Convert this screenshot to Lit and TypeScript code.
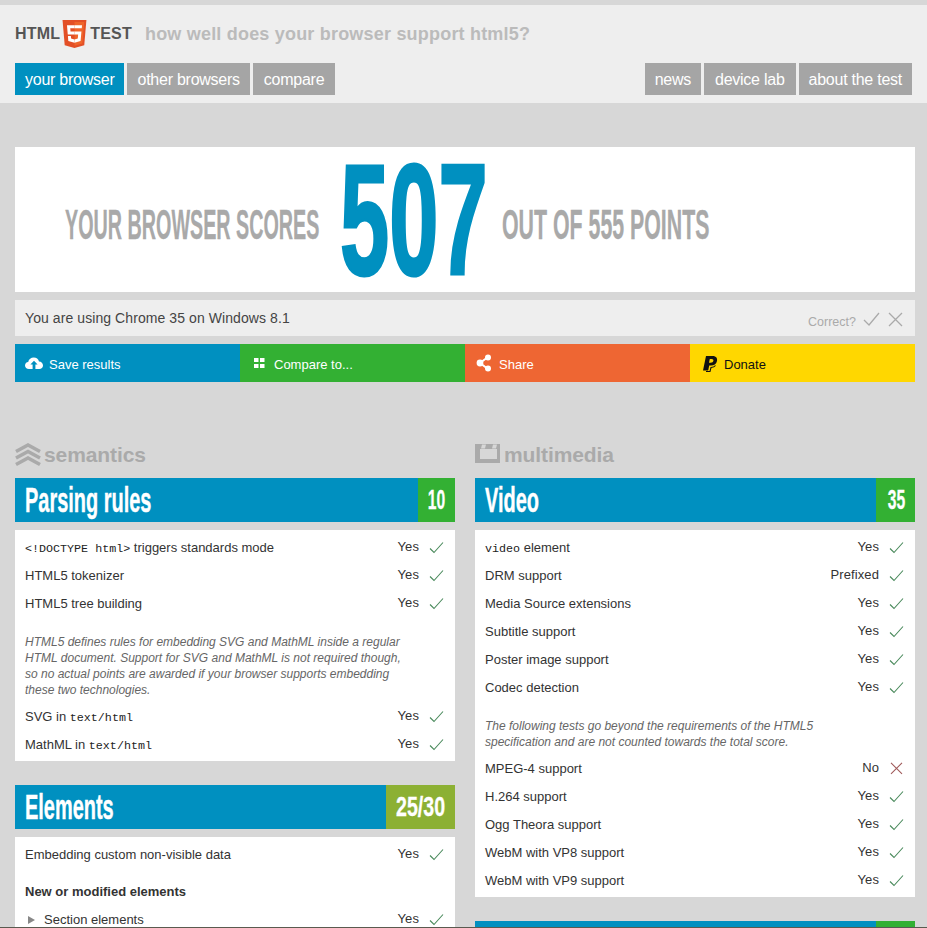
import { LitElement, html, css, svg } from "lit";
import { customElement } from "lit/decorators.js";

type Row = { label: unknown; status?: string; kind?: "yes" | "no" };
const check = svg`<svg class="mark" viewBox="0 0 15 13"><path d="M1 7.5 L5 11.5 L14 1.5" fill="none" stroke="#4a8a5c" stroke-width="1.1"/></svg>`;
const cross = svg`<svg class="mark" viewBox="0 0 15 13"><path d="M2 .8 L13 11.8 M13 .8 L2 11.8" fill="none" stroke="#a05a5a" stroke-width="1.1"/></svg>`;

const yes = (label: unknown): Row => ({ label, status: "Yes", kind: "yes" });

@customElement("app-root")
export class AppRoot extends LitElement {
  static styles = css`
    :host { display: block; position: relative; height: 928px; overflow: hidden; background: #d7d7d7; font-family: "Liberation Sans", Arial, sans-serif; color: #333; font-size: 13px; }
    * { box-sizing: border-box; }
    code { font-family: "Liberation Mono", monospace; font-size: 11.7px; color: #222; }
    .frame { position: absolute; left: 0; right: 0; bottom: 0; height: 1px; background: #5a5a50; }
    header { margin-top: 5px; height: 98px; background: #eee; padding: 15px 15px 0; }
    .brand { display: flex; align-items: center; height: 28px; font-weight: bold; font-size: 16px; color: #555; letter-spacing: .2px; }
    .brand svg { width: 25px; height: 28px; margin: 0 3px 0 2px; }
    .tagline { margin-left: 13px; font-size: 18px; color: #bbb; letter-spacing: .2px; }
    nav { display: flex; justify-content: space-between; margin-top: 15px; }
    .tabs { display: flex; gap: 3px; }
    .tab { height: 32px; line-height: 34px; padding: 0 10px; background: #a5a5a5; color: #fff; font-size: 16px; letter-spacing: -.25px; }
    .tab.on { background: #0090c0; }
    .tab.wide { padding: 0 11px; }
    main { padding: 44px 12px 0 15px; }
    .score { height: 145px; background: #fff; display: flex; align-items: center; padding-left: 50px; }
    .cond { display: block; white-space: nowrap; transform-origin: left center; font-weight: bold; }
    .sl { width: 275px; color: #a9a9a9; }
    .sl .cond { font-size: 42px; transform: scaleX(.47); margin-top: 10px; -webkit-text-stroke: .3px #a9a9a9; }
    .num { width: 162px; color: #0090c0; }
    .num .cond { font-size: 158px; line-height: 145px; transform: scaleX(.56); -webkit-text-stroke: 3px #0090c0; }
    .sl.sr .cond { transform: scaleX(.508); }
    .info { margin-top: 8px; height: 36px; background: #eee; display: flex; align-items: center; justify-content: space-between; padding: 0 11px 0 10px; font-size: 14px; color: #444; letter-spacing: .08px; }
    .correct { display: flex; align-items: center; gap: 7px; color: #aaa; font-size: 12.5px; padding-top: 2px; letter-spacing: 0; }
    .correct span { margin-top: 5px; }
    .correct svg { width: 17px; height: 16px; }
    .actions { margin-top: 8px; display: grid; grid-template-columns: repeat(4, 1fr); height: 38px; }
    .act { display: flex; align-items: center; padding-left: 10px; color: #fff; font-size: 13px; gap: 6px; padding-top: 2px; }
    .act svg { width: 18px; height: 18px; flex: none; margin-top: -3px; }
    .blue { background: #0090c0; } .green { background: #33b033; } .orange { background: #ee6633; } .gold { background: #ffd700; color: #111; }
    .cols { margin-top: 59px; display: grid; grid-template-columns: 440px 440px; gap: 20px; align-items: start; }
    .sect { display: flex; align-items: center; height: 26px; padding-top: 2px; margin-bottom: 11px; font-size: 21px; font-weight: bold; color: #aaa; letter-spacing: -.1px; gap: 3px; }
    .sect svg { width: 26px; height: 26px; flex: none; margin-top: -2px; }
    .hd { display: flex; height: 44px; background: #0090c0; color: #fff; }
    .hd .t { flex: 1; padding-left: 10px; }
    .hd .t .cond { font-size: 35px; line-height: 44px; transform: scaleX(.57); -webkit-text-stroke: .4px #fff; }
    .badge { width: var(--w); text-align: right; background: #33b033; padding-right: 10px; overflow: hidden; }
    .badge.mid { background: #8cb033; }
    .badge .cond { font-size: 28px; line-height: 44px; transform: scaleX(.56); transform-origin: right center; display: inline-block; margin-left: -60px; -webkit-text-stroke: .3px #fff; }
    .badge.mid .cond { transform: scaleX(.7); }
    .panel { margin: 8px 0 24px; background: #fff; padding: 3px 10px; }
    .row { height: 28px; display: flex; align-items: center; padding-top: 1px; }
    .row .l { flex: 1; }
    .row .s { margin-top: -3px; letter-spacing: .1px; }
    .mark { width: 15px; height: 13px; margin: -1px 1px 0 10px; flex: none; }
    .note { margin: 17px 0 4px; max-width: 390px; font-size: 12px; line-height: 16px; font-style: italic; color: #666; }
    .sub { font-weight: bold; margin-top: 10px; height: 27px; display: flex; align-items: center; }
    .arrow { display: inline-block; width: 0; height: 0; border-left: 7px solid #888; border-top: 4px solid transparent; border-bottom: 4px solid transparent; margin: 0 9px 0 3px; }
  `;

  private cond(text: string) {
    return html`<span class="cond">${text}</span>`;
  }

  private head(title: string, score: string, w: number, mid = false) {
    return html`<div class="hd">
      <div class="t">${title ? this.cond(title) : ""}</div>
      <div class="badge ${mid ? "mid" : ""}" style="--w:${w}px">${score ? this.cond(score) : ""}</div>
    </div>`;
  }

  private row(r: Row) {
    return html`<div class="row"><span class="l">${r.label}</span><span class="s">${r.status}</span>${r.kind === "no" ? cross : check}</div>`;
  }

  render() {
    return html`
      <header>
        <div class="brand">
          <span>HTML</span>
          <svg viewBox="20 0 472 512" preserveAspectRatio="none">
            <path d="M71 460L30 0h451l-41 460-185 52" fill="#e34f26"/>
            <path d="M256 472l149-41 35-394H256" fill="#ef652a"/>
            <path d="M256 208h-75l-5-58h80V94H114l15 171h127zm-1 147l-63-17-4-45h-56l7 89 116 32z" fill="#fff"/>
            <path d="M255 208v57h70l-7 74-63 17v59l116-32 16-175zm1-114v56h137l5-56z" fill="#fff"/>
          </svg>
          <span>TEST</span>
          <span class="tagline">how well does your browser support html5?</span>
        </div>
        <nav>
          <div class="tabs">
            <div class="tab on">your browser</div>
            <div class="tab">other browsers</div>
            <div class="tab wide">compare</div>
          </div>
          <div class="tabs">
            <div class="tab">news</div>
            <div class="tab wide">device lab</div>
            <div class="tab">about the test</div>
          </div>
        </nav>
      </header>
      <main>
        <section class="score">
          <div class="sl">${this.cond("YOUR BROWSER SCORES")}</div>
          <div class="num">${this.cond("507")}</div>
          <div class="sl sr">${this.cond("OUT OF 555 POINTS")}</div>
        </section>
        <div class="info">
          <span>You are using Chrome 35 on Windows 8.1</span>
          <div class="correct">
            <span>Correct?</span>
            <svg viewBox="0 0 17 16"><path d="M1 9 L6 14 L16 2" fill="none" stroke="#aaa" stroke-width="1.3"/></svg>
            <svg viewBox="0 0 17 16"><path d="M2 2 L15 15 M15 2 L2 15" fill="none" stroke="#aaa" stroke-width="1.3"/></svg>
          </div>
        </div>
        <div class="actions">
          <div class="act blue">
            <svg viewBox="0 0 18 18"><path d="M4 15 C1.5 15 0 13.4 0 11.5 C0 9.6 1.4 8.2 3.2 8 C3.8 5.4 6 3.6 8.8 3.6 C11.4 3.6 13.4 5.2 14 7.5 C16.3 7.6 18 9.3 18 11.4 C18 13.4 16.4 15 14.3 15 Z" fill="#fff"/><path d="M9 6.8 L12.6 10.6 L10.4 10.6 L10.4 15 L7.6 15 L7.6 10.6 L5.4 10.6 Z" fill="#0090c0"/></svg>
            Save results
          </div>
          <div class="act green">
            <svg viewBox="0 0 18 18"><g fill="#fff"><rect x="4" y="4" width="4.5" height="4"/><rect x="10" y="4" width="4.5" height="4"/><rect x="4" y="10" width="4.5" height="4"/><rect x="10" y="10" width="4.5" height="4"/></g></svg>
            Compare to...
          </div>
          <div class="act orange">
            <svg viewBox="0 0 18 18"><path d="M13 3 L5 9 L13 15" fill="none" stroke="#fff" stroke-width="2"/><circle cx="13" cy="3.4" r="3" fill="#fff"/><circle cx="5" cy="9" r="3.4" fill="#fff"/><circle cx="13" cy="14.6" r="3" fill="#fff"/></svg>
            Share
          </div>
          <div class="act gold">
            <svg viewBox="0 0 18 18"><path d="M3 16.5 L6 2 H12.5 C16.5 2 17.5 4.6 17 7 C16.4 10 14 11.5 11 11.5 H9.2 L8.2 16.5 Z M9.8 5 L9 8.8 H10.6 C12.2 8.8 13.2 8 13.4 6.8 C13.6 5.7 12.9 5 11.6 5 Z" fill="#111" fill-rule="evenodd"/><path d="M15.5 11.5 C14.5 13 13 13.4 11 13.5 L10 17.5 L6 17.5" fill="none" stroke="#111" stroke-width="1.1"/></svg>
            Donate
          </div>
        </div>
        <div class="cols">
          <div>
            <div class="sect">
              <svg viewBox="0 0 26 26"><g fill="none" stroke="#aaa" stroke-width="3.6"><path d="M1 10.5 L13 4 L25 10.5"/><path d="M1 17 L13 10.5 L25 17"/><path d="M1 23.5 L13 17 L25 23.5"/></g></svg>
              semantics
            </div>
            ${this.head("Parsing rules", "10", 37)}
            <div class="panel">
              ${[yes(html`<code>&lt;!DOCTYPE html&gt;</code> triggers standards mode`), yes("HTML5 tokenizer"), yes("HTML5 tree building")].map((r) => this.row(r))}
              <div class="note">HTML5 defines rules for embedding SVG and MathML inside a regular HTML document. Support for SVG and MathML is not required though, so no actual points are awarded if your browser supports embedding these two technologies.</div>
              ${[yes(html`SVG in <code>text/html</code>`), yes(html`MathML in <code>text/html</code>`)].map((r) => this.row(r))}
            </div>
            ${this.head("Elements", "25/30", 69, true)}
            <div class="panel">
              ${this.row(yes("Embedding custom non-visible data"))}
              <div class="sub">New or modified elements</div>
              ${this.row(yes(html`<i class="arrow"></i>Section elements`))}
            </div>
          </div>
          <div>
            <div class="sect">
              <svg viewBox="0 0 26 26"><path d="M0 3 H25 V22 H0 Z M5 8 V18 H22 V8 Z M7 3.5 L6 7.5 H10 L11 3.5 Z M18 3.5 L17 7.5 H21 L22 3.5 Z" fill="#aaa" fill-rule="evenodd"/></svg>
              multimedia
            </div>
            ${this.head("Video", "35", 39)}
            <div class="panel">
              ${[yes(html`<code>video</code> element`), { label: "DRM support", status: "Prefixed", kind: "yes" } as Row, yes("Media Source extensions"), yes("Subtitle support"), yes("Poster image support"), yes("Codec detection")].map((r) => this.row(r))}
              <div class="note">The following tests go beyond the requirements of the HTML5 specification and are not counted towards the total score.</div>
              ${[{ label: "MPEG-4 support", status: "No", kind: "no" } as Row, yes("H.264 support"), yes("Ogg Theora support"), yes("WebM with VP8 support"), yes("WebM with VP9 support")].map((r) => this.row(r))}
            </div>
            ${this.head("", "", 39)}
          </div>
        </div>
      </main>
      <div class="frame"></div>
    `;
  }
}
